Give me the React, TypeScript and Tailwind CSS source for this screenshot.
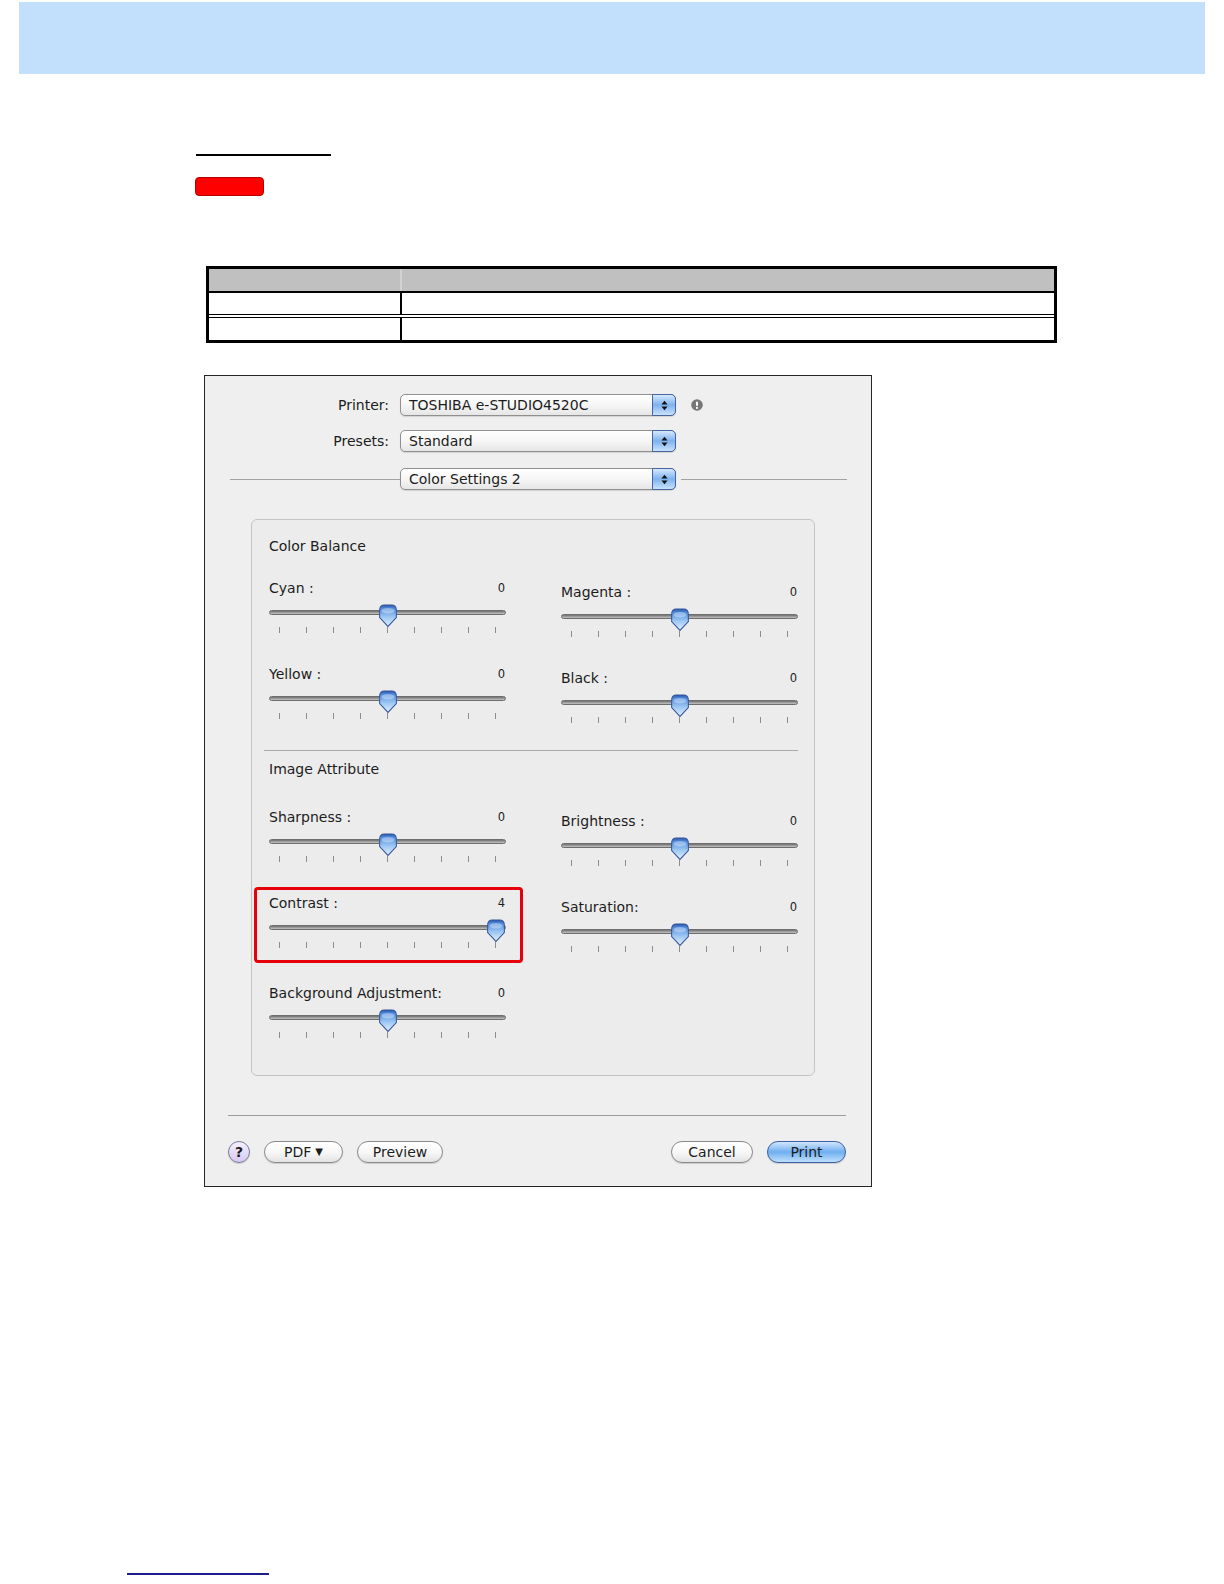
import { useId } from 'react';

type SliderProps = {
  label: string;
  value: number;
  highlight?: boolean;
  className?: string;
};

// blue aqua slider knob, pointed at the bottom
function Thumb({ left }: { left: number }) {
  const id = useId();
  return (
    <svg
      className="absolute top-[25px] h-[24px] w-[20px]"
      style={{ left: left - 0.5 }}
      viewBox="0 0 19 23"
    >
      <defs>
        <linearGradient id={id} x1="0" y1="0" x2="0" y2="1">
          <stop offset="0" stopColor="#2a58ae" />
          <stop offset="0.18" stopColor="#5892df" />
          <stop offset="0.55" stopColor="#9cc6f3" />
          <stop offset="1" stopColor="#e2f1ff" />
        </linearGradient>
      </defs>
      <path
        d="M1.5 6 C1.5 2.6 3.4 1 6 1 H13 C15.6 1 17.5 2.6 17.5 6 V13 L9.5 21.5 L1.5 13 Z"
        fill={`url(#${id})`}
        stroke="#34559a"
        strokeWidth="1"
      />
      <ellipse cx="9.5" cy="6.5" rx="6" ry="2.6" fill="#ffffff" opacity="0.35" />
    </svg>
  );
}

function Slider({ label, value, highlight, className = '' }: SliderProps) {
  const idx = value + 4;
  return (
    <div className={`relative w-[237px] ${className}`}>
      {highlight && (
        <div className="pointer-events-none absolute -left-[15px] -top-[7px] h-[76px] w-[269px] rounded-[4px] border-[3px] border-[#e6000a]" />
      )}
      <div className="flex h-[18px] items-center justify-between">
        <span className="text-[14px] leading-[18px]">{label}</span>
        <span className="pr-[1px] text-[11.5px] leading-[18px]">{value}</span>
      </div>
      <div className="mt-[13px] h-[5px] rounded-full border border-[#6e6e6e] bg-linear-to-b from-[#707070] via-[#9a9a9a] to-[#c4c4c4]" />
      <div className="mt-[12px] flex h-[6px] justify-between px-[10px]">
        {Array.from({ length: 9 }).map((_, i) => (
          <span key={i} className="h-full w-px bg-[#8d8d8d]" />
        ))}
      </div>
      <Thumb left={1 + idx * 27} />
    </div>
  );
}

function Popup({ text }: { text: string }) {
  return (
    <div className="flex h-[22px] w-[276px] rounded-[5px] border border-[#909090] bg-linear-to-b from-white via-[#f6f6f6] to-[#e6e6e6] shadow-[0_1px_1px_rgba(0,0,0,0.12)]">
      <div className="flex-1 pl-[8px] text-[14px] leading-[20px]">{text}</div>
      <div className="-my-px -mr-px flex h-[22px] w-[24px] items-center justify-center rounded-r-[5px] border border-[#46649f] bg-linear-to-b from-[#d6e8fc] via-[#7db2ef] to-[#c9e2fc]">
        <svg width="7" height="11" viewBox="0 0 7 11">
          <path d="M3.5 0.8 L6.5 4.4 H0.5 Z" fill="#111" />
          <path d="M3.5 10.2 L6.5 6.6 H0.5 Z" fill="#111" />
        </svg>
      </div>
    </div>
  );
}

function AquaButton({ children, className = '', primary }: { children: React.ReactNode; className?: string; primary?: boolean }) {
  return (
    <div
      className={`flex h-[22px] items-center justify-center rounded-full border text-[14px] leading-none shadow-[0_1px_1px_rgba(0,0,0,0.15)] ${
        primary
          ? 'border-[#3c5ea3] bg-linear-to-b from-[#d2e7fc] via-[#6eaef0] to-[#bfe0fd]'
          : 'border-[#8a8a8a] bg-linear-to-b from-white via-[#f8f8f8] to-[#e3e3e3]'
      } ${className}`}
    >
      {children}
    </div>
  );
}

function InfoTable() {
  return (
    <div className="ml-[206px] mt-[70px] w-[851px] border-[3px] border-black">
      <div className="flex h-[22px]">
        <div className="w-[191px] bg-[#c0c0c0]" />
        <div className="w-[2px] bg-[#d2d2d2]" />
        <div className="flex-1 bg-[#c0c0c0]" />
      </div>
      <div className="h-[2px] bg-black" />
      <div className="flex h-[21px]">
        <div className="w-[191px]" />
        <div className="w-[2px] bg-black" />
        <div className="flex-1" />
      </div>
      <div className="h-px bg-black" />
      <div className="h-[2px] bg-white" />
      <div className="h-px bg-black" />
      <div className="flex h-[22px]">
        <div className="w-[191px]" />
        <div className="w-[2px] bg-black" />
        <div className="flex-1" />
      </div>
    </div>
  );
}

function PrintDialog() {
  return (
    <div className="ml-[204px] mt-[32px] flex h-[812px] w-[668px] flex-col border border-[#262626] bg-[#efefef] pt-[18px] font-['DejaVu_Sans','Liberation_Sans',sans-serif] text-[#1c1c1c]">
      {/* printer / presets */}
      <div className="flex h-[22px] items-center">
        <div className="w-[184px] text-right text-[14px]">Printer:</div>
        <div className="ml-[11px]">
          <Popup text="TOSHIBA e-STUDIO4520C" />
        </div>
        <svg className="ml-[15px]" width="12" height="12" viewBox="0 0 12 12">
          <circle cx="6" cy="6" r="5.8" fill="#777" />
          <rect x="5" y="2.4" width="2" height="4.6" rx="1" fill="#fff" />
          <circle cx="6" cy="8.9" r="1.05" fill="#fff" />
        </svg>
      </div>
      <div className="mt-[14px] flex h-[22px] items-center">
        <div className="w-[184px] text-right text-[14px]">Presets:</div>
        <div className="ml-[11px]">
          <Popup text="Standard" />
        </div>
      </div>
      <div className="mt-[16px] flex h-[22px] items-center">
        <div className="ml-[25px] h-px w-[170px] bg-[#a2a2a2]" />
        <Popup text="Color Settings 2" />
        <div className="ml-[5px] h-px w-[166px] bg-[#a2a2a2]" />
      </div>

      {/* settings group box */}
      <div className="ml-[46px] mt-[29px] h-[557px] w-[564px] rounded-[6px] border border-[#c4c4c4] bg-[#ececec] pl-[17px] pt-[17px]">
        <div className="h-[18px] text-[14px] leading-[18px]">Color Balance</div>
        <div className="mt-[24px] grid grid-cols-[237px_237px] items-start gap-x-[55px]">
          <div className="flex flex-col gap-[32px]">
            <Slider label="Cyan :" value={0} />
            <Slider label="Yellow :" value={0} />
          </div>
          <div className="mt-[4px] flex flex-col gap-[32px]">
            <Slider label="Magenta :" value={0} />
            <Slider label="Black :" value={0} />
          </div>
        </div>
        <div className="-ml-[5px] mt-[27px] h-px w-[534px] bg-[#a9a9a9]" />
        <div className="mt-[9px] h-[18px] text-[14px] leading-[18px]">Image Attribute</div>
        <div className="mt-[30px] grid grid-cols-[237px_237px] items-start gap-x-[55px]">
          <div className="flex flex-col gap-[32px]">
            <Slider label="Sharpness :" value={0} />
            <Slider label="Contrast :" value={4} highlight />
            <Slider label="Background Adjustment:" value={0} className="mt-[4px]" />
          </div>
          <div className="mt-[4px] flex flex-col gap-[32px]">
            <Slider label="Brightness :" value={0} />
            <Slider label="Saturation:" value={0} />
          </div>
        </div>
      </div>

      <div className="ml-[23px] mt-[39px] h-px w-[618px] bg-[#9d9d9d]" />

      {/* bottom buttons */}
      <div className="ml-[23px] mt-[25px] flex w-[618px] items-center">
        <div className="flex h-[22px] w-[22px] items-center justify-center rounded-full border border-[#7a7a96] bg-linear-to-b from-[#f5f0ff] to-[#d6caf1] text-[14px] font-bold leading-none shadow-[0_1px_1px_rgba(0,0,0,0.15)]">
          ?
        </div>
        <AquaButton className="ml-[14px] w-[79px]">
          PDF <span className="ml-[4px] text-[10px]">▼</span>
        </AquaButton>
        <AquaButton className="ml-[14px] w-[86px]">Preview</AquaButton>
        <div className="flex-1" />
        <AquaButton className="w-[82px]">Cancel</AquaButton>
        <AquaButton className="ml-[14px] w-[79px]" primary>
          Print
        </AquaButton>
      </div>
    </div>
  );
}

export default function App() {
  return (
    <div className="flex h-[1584px] w-[1224px] flex-col items-start overflow-hidden bg-white">
      <div className="ml-[19px] mt-[2px] h-[72px] w-[1186px] bg-[#c2e0fc]" />
      <div className="ml-[196px] mt-[80px] h-[2px] w-[135px] bg-black" />
      <div className="ml-[195px] mt-[21px] h-[19px] w-[69px] rounded-[4px] border border-[#b80000] bg-[#ff0000]" />
      <InfoTable />
      <PrintDialog />
      <div className="ml-[127px] mt-[386px] h-[2px] w-[142px] bg-[#1c1c8c]" />
    </div>
  );
}
